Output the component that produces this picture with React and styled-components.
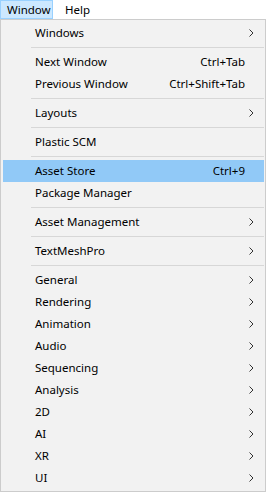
import React from "react";
import styled, { createGlobalStyle } from "styled-components";

const Global = createGlobalStyle`
  html, body { margin: 0; padding: 0; background: #ffffff; }
  body { font-family: "Noto Sans", "Segoe UI", sans-serif; font-size: 11.5px; color: #000; }
`;

const Page = styled.div`
  width: 267px;
  height: 492px;
  display: flex;
  flex-direction: column;
  background: #ffffff;
`;

const MenuBar = styled.div`
  display: flex;
  height: 19px;
  align-items: stretch;
`;

const BarItem = styled.div`
  box-sizing: border-box;
  height: 19px;
  width: ${(p) => (p.$w ? `${p.$w}px` : "auto")};
  padding: 0 0 0 ${(p) => p.$pl}px;
  display: flex;
  align-items: center;
  border: 1px solid ${(p) => (p.$active ? "#99d1ff" : "transparent")};
  background: ${(p) => (p.$active ? "#cce8ff" : "transparent")};
  line-height: 1;
  white-space: nowrap;
`;

const Menu = styled.div`
  box-sizing: border-box;
  width: 266px;
  height: 473px;
  border: 1px solid #cccccc;
  background: #f2f2f2;
  padding: 2px 1px 2px 2px;
  display: flex;
  flex-direction: column;
`;

const Row = styled.div`
  height: 22px;
  display: flex;
  align-items: center;
  padding: 0 10px 1px 32px;
  box-sizing: border-box;
  background: ${(p) => (p.$hl ? "#91c9f7" : "transparent")};
  white-space: nowrap;
`;

const Label = styled.span`
  flex: 1;
`;

const Shortcut = styled.span`
  padding-right: 9px;
`;

const Chevron = styled.svg`
  width: 5px;
  height: 8px;
`;

const Sep = styled.div`
  height: 7px;
  display: flex;
  align-items: center;
  padding-left: 28px;
  &::after {
    content: "";
    flex: 1;
    height: 1px;
    background: #d7d7d7;
    margin-top: -1px;
  }
`;

const Arrow = () => (
  <Chevron viewBox="0 0 5 8">
    <polyline points="0.5,0.5 4,4 0.5,7.5" fill="none" stroke="#333" strokeWidth="1" />
  </Chevron>
);

const items = [
  { l: "Windows", sub: true },
  "sep",
  { l: "Next Window", k: "Ctrl+Tab" },
  { l: "Previous Window", k: "Ctrl+Shift+Tab" },
  "sep",
  { l: "Layouts", sub: true },
  "sep",
  { l: "Plastic SCM" },
  "sep",
  { l: "Asset Store", k: "Ctrl+9", hl: true },
  { l: "Package Manager" },
  "sep",
  { l: "Asset Management", sub: true },
  "sep",
  { l: "TextMeshPro", sub: true },
  "sep",
  { l: "General", sub: true },
  { l: "Rendering", sub: true },
  { l: "Animation", sub: true },
  { l: "Audio", sub: true },
  { l: "Sequencing", sub: true },
  { l: "Analysis", sub: true },
  { l: "2D", sub: true },
  { l: "AI", sub: true },
  { l: "XR", sub: true },
  { l: "UI", sub: true },
];

export default function App() {
  return (
    <Page>
      <Global />
      <MenuBar>
        <BarItem $active $w={53} $pl={6}>Window</BarItem>
        <BarItem $pl={11}>Help</BarItem>
      </MenuBar>
      <Menu>
        {items.map((it, i) =>
          it === "sep" ? (
            <Sep key={i} />
          ) : (
            <Row key={i} $hl={it.hl}>
              <Label>{it.l}</Label>
              {it.k && <Shortcut>{it.k}</Shortcut>}
              {it.sub && <Arrow />}
            </Row>
          )
        )}
      </Menu>
    </Page>
  );
}
